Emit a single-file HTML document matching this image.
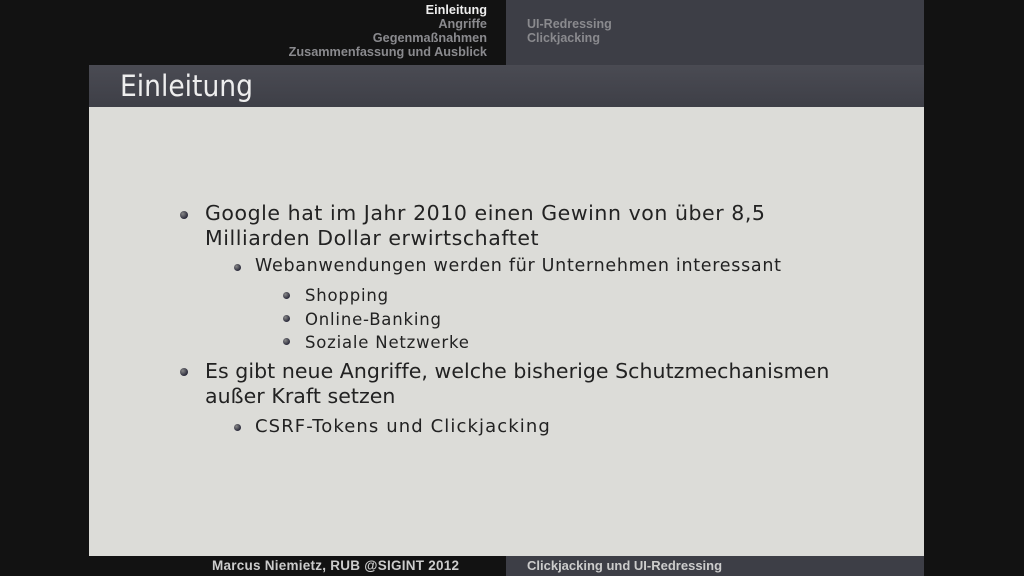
<!DOCTYPE html>
<html><head><meta charset="utf-8"><style>
body{margin:0;width:1024px;height:576px;background:#121212;position:relative;overflow:hidden;font-family:"DejaVu Sans Condensed","Liberation Sans",sans-serif;}
div{position:absolute}
.nav{right:537px;text-align:right;font-size:12.7px;color:#8a8a8e;font-weight:bold;line-height:14px;top:3px;font-family:"Liberation Sans",sans-serif}
.t{font-family:"DejaVu Sans","Liberation Sans",sans-serif;color:#222;white-space:nowrap}
.b{width:8px;height:8px;border-radius:50%;background:radial-gradient(circle at 35% 35%,#888,#2a2a3a 70%)}
.s{width:7px;height:7px}
</style></head><body>
<div style="left:506px;top:0;width:418px;height:65px;background:#3d3e46"></div>
<div class="nav"><span style="color:#eee">Einleitung</span><br>Angriffe<br>Gegenmaßnahmen<br>Zusammenfassung und Ausblick</div>
<div style="left:527px;top:17px;font-size:12.5px;line-height:14px;color:#8a8a8e;font-weight:bold;font-family:'Liberation Sans',sans-serif">UI-Redressing<br>Clickjacking</div>
<div style="left:89px;top:65px;width:835px;height:42px;background:linear-gradient(#4a4b53,#3e3f47)"></div>
<div style="left:120px;top:69px;font-size:29.5px;color:#eee;font-family:'DejaVu Sans Condensed',sans-serif">Einleitung</div>
<div style="left:89px;top:107px;width:835px;height:449px;background:#dcdcd8"></div>
<div style="left:506px;top:556px;width:418px;height:20px;background:#3d3e46"></div>
<div style="left:212px;top:558px;font-size:13.5px;letter-spacing:0.25px;color:#ccc;font-weight:bold;font-family:'Liberation Sans',sans-serif">Marcus Niemietz, RUB @SIGINT 2012</div>
<div style="left:527px;top:558px;font-size:13px;color:#ccc;font-weight:bold;font-family:'Liberation Sans',sans-serif">Clickjacking und UI-Redressing</div>

<div class="b" style="left:180px;top:211px"></div>
<div class="t" style="left:205px;top:201px;font-size:20.5px;line-height:25px;letter-spacing:0.55px">Google hat im Jahr 2010 einen Gewinn von über 8,5<br>Milliarden Dollar erwirtschaftet</div>
<div class="b s" style="left:234px;top:264px"></div>
<div class="t" style="left:255px;top:256px;font-size:17.5px;letter-spacing:0.7px">Webanwendungen werden für Unternehmen interessant</div>
<div class="b s" style="left:283px;top:292px"></div>
<div class="b s" style="left:283px;top:315px"></div>
<div class="b s" style="left:283px;top:338px"></div>
<div class="t" style="left:305px;top:284px;font-size:16.5px;line-height:23.5px;letter-spacing:0.8px">Shopping<br>Online-Banking<br>Soziale Netzwerke</div>
<div class="b" style="left:180px;top:368px"></div>
<div class="t" style="left:205px;top:359px;font-size:20.5px;line-height:25px;letter-spacing:0.05px">Es gibt neue Angriffe, welche bisherige Schutzmechanismen<br>außer Kraft setzen</div>
<div class="b s" style="left:234px;top:424px"></div>
<div class="t" style="left:255px;top:416px;font-size:18px;letter-spacing:1.1px">CSRF-Tokens und Clickjacking</div>
</body></html>
